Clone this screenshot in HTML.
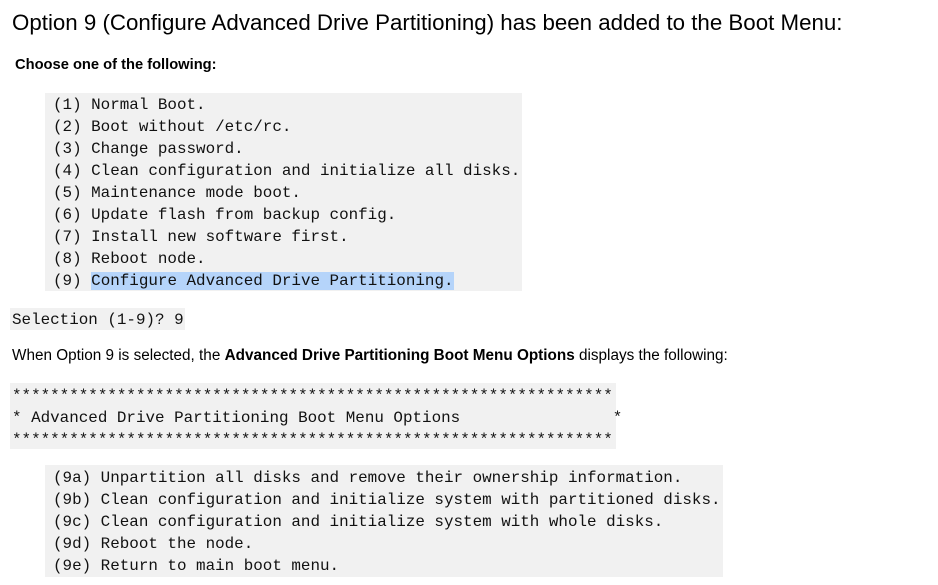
<!DOCTYPE html>
<html><head><meta charset="utf-8"><style>
body{margin:0;width:938px;height:585px;background:#fff;position:relative;overflow:hidden;color:#000}
.a{position:absolute;white-space:pre}
.s{font-family:"Liberation Sans",sans-serif}
.m{font-family:"Liberation Mono",monospace;font-size:15.9px;line-height:22px;color:#111}
.box{position:absolute;background:#f1f1f1}
.hl{background:#b5d4fa}
</style></head><body>
<div class="a s" style="left:12px;top:10px;font-size:22.3px;">Option 9 (Configure Advanced Drive Partitioning) has been added to the Boot Menu:</div>
<div class="a s" style="left:15px;top:57px;font-size:14.7px;font-weight:bold;">Choose one of the following:</div>
<div class="box" style="left:45px;top:93px;width:477px;height:198px"></div>
<div class="a m" style="left:53px;top:94px">(1) Normal Boot.
(2) Boot without /etc/rc.
(3) Change password.
(4) Clean configuration and initialize all disks.
(5) Maintenance mode boot.
(6) Update flash from backup config.
(7) Install new software first.
(8) Reboot node.
(9) <span class="hl">Configure Advanced Drive Partitioning.</span></div>
<div class="box" style="left:10px;top:308px;width:175px;height:22px"></div>
<div class="a m" style="left:12px;top:309px">Selection (1-9)? 9</div>
<div class="a s" style="left:12px;top:347px;font-size:15.3px;">When Option 9 is selected, the <b>Advanced Drive Partitioning Boot Menu Options</b> displays the following:</div>
<div class="box" style="left:10px;top:383px;width:606px;height:66px"></div>
<div class="a m" style="left:12px;top:385px">***************************************************************
* Advanced Drive Partitioning Boot Menu Options                *
***************************************************************</div>
<div class="box" style="left:45px;top:465px;width:678px;height:112px"></div>
<div class="a m" style="left:53px;top:467px">(9a) Unpartition all disks and remove their ownership information.
(9b) Clean configuration and initialize system with partitioned disks.
(9c) Clean configuration and initialize system with whole disks.
(9d) Reboot the node.
(9e) Return to main boot menu.</div>
</body></html>
